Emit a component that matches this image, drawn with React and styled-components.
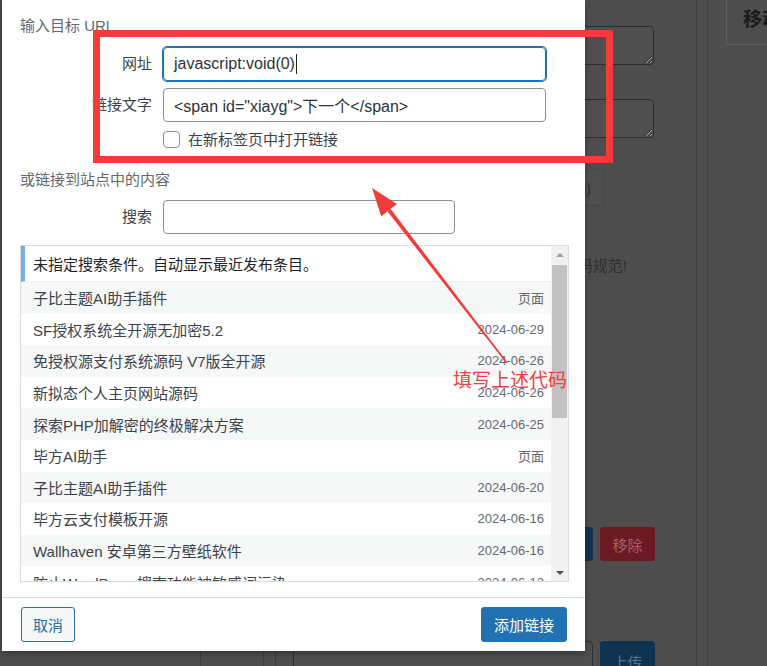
import React from 'react';
import styled, { createGlobalStyle } from 'styled-components';

const GlobalStyle = createGlobalStyle`
  html, body {
    margin: 0;
    padding: 0;
  }
  body {
    font-family: "Liberation Sans", "Noto Sans CJK SC", sans-serif;
    font-size: 15px;
  }
`;

const Screen = styled.div`
  position: relative;
  width: 767px;
  height: 666px;
  overflow: hidden;
  background: #4d4d4d;
`;

/* dimmed page behind the modal */
const Page = styled.div`
  display: flex;
  height: 100%;
`;

const Main = styled.div`
  width: 697px;
  flex-shrink: 0;
  box-sizing: border-box;
  border-right: 1px solid #3f3f3f;
  padding: 26px 0 0;
  display: flex;
  flex-direction: column;
`;

const Gutter = styled.div`
  width: 10px;
  flex-shrink: 0;
`;

const Sidebar = styled.div`
  flex: 1;
  border-left: 1px solid #3f3f3f;
  padding-left: 18px;
`;

const SideBox = styled.div`
  width: 80px;
  height: 45px;
  box-sizing: border-box;
  border: 1px solid #5c5c5c;
  border-top: 0;
  padding: 4px 0 0 16px;
  font-size: 19px;
  font-weight: bold;
  color: #1a1a1a;
  white-space: nowrap;
`;

const RightRow = styled.div`
  display: flex;
  justify-content: flex-end;
  gap: 7px;
  margin-top: ${(p) => p.$top || 0}px;
  margin-right: ${(p) => p.$right || 0}px;
`;

const LeftRow = styled.div`
  display: flex;
  align-items: flex-start;
  margin-top: ${(p) => p.$top || 0}px;
  padding-left: 200px;
`;

const BgTextarea = styled.textarea`
  width: 360px;
  height: 39px;
  box-sizing: border-box;
  background: #4f4f4f;
  border: 1px solid #2c2c2c;
  border-radius: 4px;
  resize: vertical;
  display: block;
`;

const BgButton = styled.div`
  height: ${(p) => p.$h || 34}px;
  width: ${(p) => p.$w}px;
  box-sizing: border-box;
  border-radius: 3px;
  display: flex;
  align-items: center;
  justify-content: ${(p) => (p.$end ? 'flex-end' : 'center')};
  padding-right: ${(p) => (p.$end ? 12 : 0)}px;
  font-size: 15px;
  background: ${(p) => p.$bg};
  color: ${(p) => p.$fg};
  border: 1px solid ${(p) => p.$line || p.$bg};
`;

const BgNote = styled.div`
  line-height: 20px;
  color: #2f2f2f;
  white-space: nowrap;
`;

const BgCell = styled.div`
  width: ${(p) => p.$w}px;
  height: 40px;
  box-sizing: border-box;
  border-left: 1px solid #3a3a3a;
  border-right: ${(p) => (p.$closed ? '1px solid #3a3a3a' : '0')};
  margin-right: ${(p) => p.$gap || 0}px;
`;

const BgInput = styled.div`
  width: 300px;
  height: 36px;
  box-sizing: border-box;
  border: 1px solid #2c2c2c;
  border-radius: 4px;
  background: #4f4f4f;
  margin-right: 7px;
`;

/* link dialog */
const Dialog = styled.div`
  position: absolute;
  left: 2px;
  top: 0;
  width: 583px;
  background: #fff;
  box-shadow: 0 3px 6px rgba(0, 0, 0, 0.3);
  display: flex;
  flex-direction: column;
`;

const Body = styled.div`
  padding: 16px 16px 0 18px;
  display: flex;
  flex-direction: column;
`;

const Heading = styled.div`
  line-height: 20px;
  color: #646970;
  font-size: 15px;
  margin-top: ${(p) => p.$top || 0}px;
`;

const Field = styled.div`
  display: grid;
  grid-template-columns: 143px auto;
  align-items: center;
  margin-top: ${(p) => p.$top || 0}px;
`;

const Label = styled.span`
  text-align: right;
  padding-right: 11px;
  color: #3c434a;
  font-size: 15px;
  line-height: 34px;
`;

const TextBox = styled.div`
  width: ${(p) => p.$w}px;
  height: 34px;
  box-sizing: border-box;
  padding: 0 10px;
  display: flex;
  align-items: center;
  border: 1px solid ${(p) => (p.$focus ? '#2271b1' : '#8c8f94')};
  box-shadow: ${(p) => (p.$focus ? '0 0 0 1px #2271b1' : 'none')};
  border-radius: 4px;
  font-size: 16px;
  color: #2c3338;
  white-space: nowrap;
`;

const Caret = styled.span`
  display: inline-block;
  width: 1px;
  height: 20px;
  margin-left: 1px;
  background: #1d2327;
`;

const CheckRow = styled.label`
  display: flex;
  align-items: center;
  gap: 8px;
  grid-column: 2;
  color: #3c434a;
  font-size: 15px;
  line-height: 17px;
`;

const CheckBox = styled.span`
  width: 17px;
  height: 17px;
  box-sizing: border-box;
  border: 1px solid #8c8f94;
  border-radius: 4px;
  background: #fff;
`;

const Results = styled.div`
  margin-top: 11px;
  width: 549px;
  height: 337px;
  box-sizing: border-box;
  border: 1px solid #dcdcde;
  display: flex;
  overflow: hidden;
`;

const ResultList = styled.div`
  flex: 1;
  overflow: hidden;
`;

const Notice = styled.div`
  height: 36px;
  box-sizing: border-box;
  border-left: 4px solid #72aee6;
  border-bottom: 1px solid #f0f0f1;
  padding-left: 8px;
  display: flex;
  align-items: center;
  color: #1d2327;
  font-size: 15px;
`;

const Item = styled.div`
  height: 31.6px;
  box-sizing: border-box;
  padding: 0 7px 0 12px;
  display: flex;
  align-items: center;
  justify-content: space-between;
  background: ${(p) => (p.$alt ? '#f6f7f7' : '#fff')};
  white-space: nowrap;
`;

const ItemTitle = styled.span`
  color: #3c434a;
  font-size: 15px;
`;

const ItemInfo = styled.span`
  color: #646970;
  font-size: 13px;
`;

const Scrollbar = styled.div`
  width: 17px;
  background: #f1f1f1;
  display: flex;
  flex-direction: column;
`;

const ScrollArrow = styled.div`
  height: 17px;
  display: flex;
  align-items: center;
  justify-content: center;
  &::before {
    content: '';
    border-left: 4px solid transparent;
    border-right: 4px solid transparent;
    ${(p) => (p.$down ? 'border-top: 4px solid #505050;' : 'border-bottom: 4px solid #a3a3a3;')}
  }
`;

const Thumb = styled.div`
  height: 153px;
  margin: 2px 1px 0;
  background: #c1c1c1;
`;

const Spacer = styled.div`
  flex: 1;
`;

const Footer = styled.div`
  margin-top: 15px;
  border-top: 1px solid #dcdcde;
  padding: 9px 18px 9px 19px;
  display: flex;
  justify-content: space-between;
`;

const Button = styled.button`
  height: 35px;
  padding: 0 ${(p) => (p.$primary ? 12 : 11)}px;
  border-radius: 3px;
  border: 1px solid #2271b1;
  background: ${(p) => (p.$primary ? '#2271b1' : '#f6f7f7')};
  color: ${(p) => (p.$primary ? '#fff' : '#2271b1')};
  font-family: inherit;
  font-size: 15px;
`;

/* annotation drawn over the screenshot */
const Markup = styled.svg`
  position: absolute;
  left: 0;
  top: 0;
  pointer-events: none;
`;

const MarkupNote = styled.span`
  position: absolute;
  left: 453px;
  top: 369px;
  font-size: 19px;
  line-height: 24px;
  color: #ec3f3f;
  white-space: nowrap;
`;

const items = [
  ['子比主题AI助手插件', '页面'],
  ['SF授权系统全开源无加密5.2', '2024-06-29'],
  ['免授权源支付系统源码 V7版全开源', '2024-06-26'],
  ['新拟态个人主页网站源码', '2024-06-26'],
  ['探索PHP加解密的终极解决方案', '2024-06-25'],
  ['毕方AI助手', '页面'],
  ['子比主题AI助手插件', '2024-06-20'],
  ['毕方云支付模板开源', '2024-06-16'],
  ['Wallhaven 安卓第三方壁纸软件', '2024-06-16'],
  ['防止WordPress搜索功能被敏感词污染', '2024-06-13'],
];

function BackgroundPage() {
  return (
    <Page>
      <Main>
        <RightRow $right={42}>
          <BgTextarea readOnly />
        </RightRow>
        <RightRow $top={34} $right={42}>
          <BgTextarea readOnly />
        </RightRow>
        <RightRow $top={31} $right={92}>
          <BgButton $w={90} $h={37} $bg="#4f4f4f" $fg="#2e2e2e" $line="#474747" $end>
            代码 (0)
          </BgButton>
        </RightRow>
        <RightRow $top={50} $right={69}>
          <BgNote>请遵守代码规范!</BgNote>
        </RightRow>
        <RightRow $top={251} $right={41}>
          <BgButton $w={90} $bg="#0e3350" $fg="#56718a">保存</BgButton>
          <BgButton $w={55} $bg="#6b1a23" $fg="#a3636a">移除</BgButton>
        </RightRow>
        <LeftRow $top={80}>
          <BgCell $w={64} $gap={11} $closed />
          <BgCell $w={18} />
          <BgInput />
          <BgButton $w={55} $h={40} $bg="#0e3350" $fg="#56718a">上传</BgButton>
        </LeftRow>
      </Main>
      <Gutter />
      <Sidebar>
        <SideBox>移动</SideBox>
      </Sidebar>
    </Page>
  );
}

function LinkDialog() {
  return (
    <Dialog>
      <Body>
        <Heading>输入目标 URL</Heading>
        <Field $top={11}>
          <Label>网址</Label>
          <TextBox $w={383} $focus>
            javascript:void(0)
            <Caret />
          </TextBox>
        </Field>
        <Field $top={7}>
          <Label>链接文字</Label>
          <TextBox $w={383}>{'<span id="xiayg">下一个</span>'}</TextBox>
        </Field>
        <Field $top={9}>
          <CheckRow>
            <CheckBox />
            在新标签页中打开链接
          </CheckRow>
        </Field>
        <Heading $top={22}>或链接到站点中的内容</Heading>
        <Field $top={10}>
          <Label>搜索</Label>
          <TextBox $w={292} />
        </Field>
        <Results>
          <ResultList>
            <Notice>未指定搜索条件。自动显示最近发布条目。</Notice>
            {items.map(([title, info], i) => (
              <Item key={i} $alt={i % 2 === 0}>
                <ItemTitle>{title}</ItemTitle>
                <ItemInfo>{info}</ItemInfo>
              </Item>
            ))}
          </ResultList>
          <Scrollbar>
            <ScrollArrow />
            <Thumb />
            <Spacer />
            <ScrollArrow $down />
          </Scrollbar>
        </Results>
      </Body>
      <Footer>
        <Button>取消</Button>
        <Button $primary>添加链接</Button>
      </Footer>
    </Dialog>
  );
}

function Annotation() {
  return (
    <>
      <Markup width="767" height="666" viewBox="0 0 767 666">
        <rect x="96.5" y="33.5" width="513" height="126" fill="none" stroke="#f23c3c" strokeWidth="7" />
        <polygon points="387.5,211.4 390.7,209 507.6,362.5 506.4,363.5" fill="#f23c3c" />
        <polygon points="372,188 397,204.1 381.2,216.3" fill="#f23c3c" />
      </Markup>
      <MarkupNote>填写上述代码</MarkupNote>
    </>
  );
}

export default function App() {
  return (
    <>
      <GlobalStyle />
      <Screen>
        <BackgroundPage />
        <LinkDialog />
        <Annotation />
      </Screen>
    </>
  );
}
